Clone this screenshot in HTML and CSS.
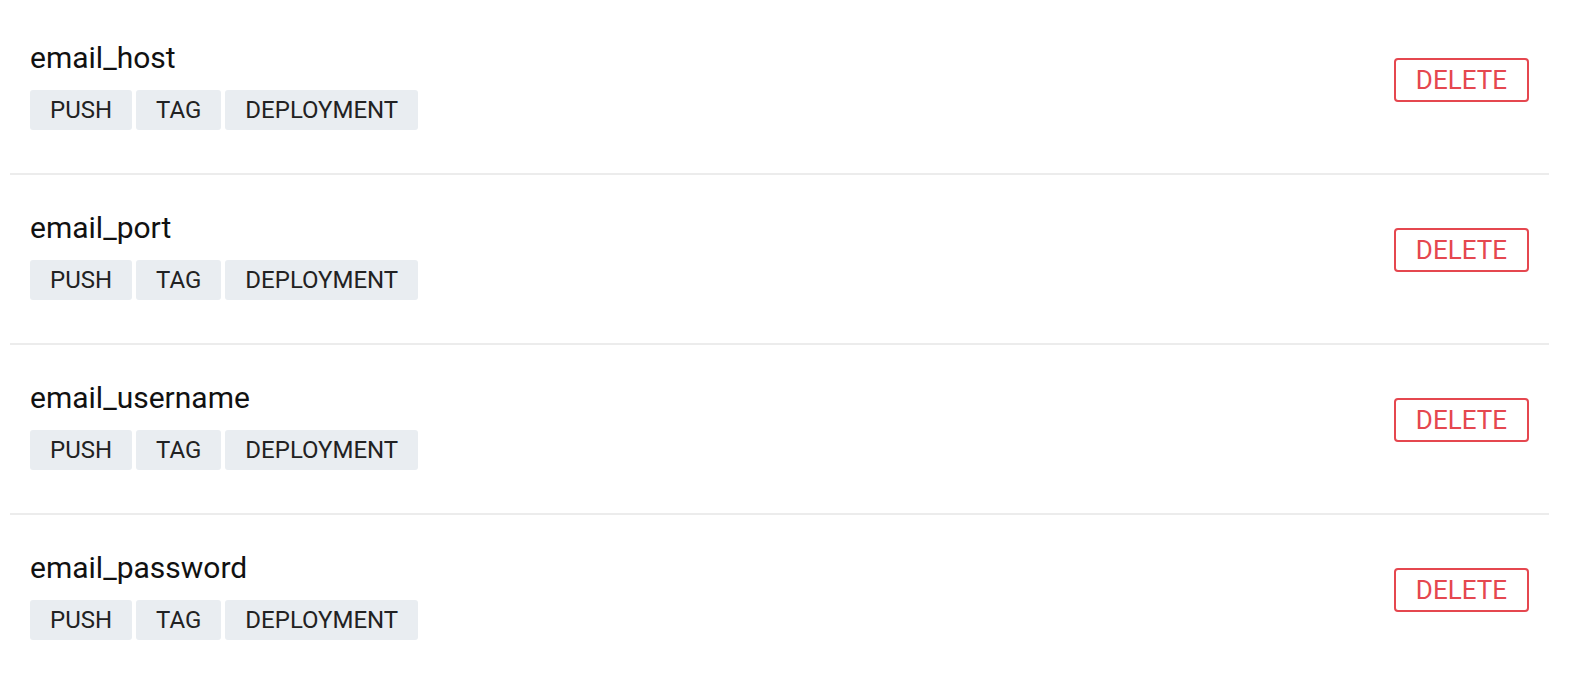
FILE: index.html
```html
<!DOCTYPE html>
<html lang="en">
<head>
  <meta charset="UTF-8" />
  <meta name="viewport" content="width=device-width, initial-scale=1.0"/>
  <title>Secrets</title>
  <link rel="stylesheet" href="styles.css">
</head>
<body>
  <div class="secrets">
    <div class="secret">
      <div class="info">
        <div class="name">email_host</div>
        <div class="events">
          <span class="event">PUSH</span>
          <span class="event">TAG</span>
          <span class="event">DEPLOYMENT</span>
        </div>
      </div>
      <button class="delete">DELETE</button>
    </div>

    <div class="secret">
      <div class="info">
        <div class="name">email_port</div>
        <div class="events">
          <span class="event">PUSH</span>
          <span class="event">TAG</span>
          <span class="event">DEPLOYMENT</span>
        </div>
      </div>
      <button class="delete">DELETE</button>
    </div>

    <div class="secret">
      <div class="info">
        <div class="name">email_username</div>
        <div class="events">
          <span class="event">PUSH</span>
          <span class="event">TAG</span>
          <span class="event">DEPLOYMENT</span>
        </div>
      </div>
      <button class="delete">DELETE</button>
    </div>

    <div class="secret">
      <div class="info">
        <div class="name">email_password</div>
        <div class="events">
          <span class="event">PUSH</span>
          <span class="event">TAG</span>
          <span class="event">DEPLOYMENT</span>
        </div>
      </div>
      <button class="delete">DELETE</button>
    </div>
  </div>
</body>
</html>
```

FILE: styles.css
```css
    body {
      font-family: Roboto, "Liberation Sans", sans-serif;
      background-color: #fff;
      color: #111;
      margin: 0;
      padding: 5px 0 0 0;
    }

    .secrets {
      margin: 0 22px 0 10px;
    }

    .secret {
      display: flex;
      justify-content: space-between;
      align-items: flex-start;
      padding: 35px 20px 43px 20px;
      border-bottom: 2px solid #ececec;
    }

    .secret:last-child {
      border-bottom: none;
    }

    .name {
      font-size: 30px;
      line-height: 36px;
      color: #111;
      margin-bottom: 14px;
    }

    .events {
      display: flex;
      gap: 4px;
    }

    .event {
      background: #e9edf1;
      color: #222;
      font-size: 24px;
      line-height: 40px;
      padding: 0 20px;
      border-radius: 3px;
    }

    .delete {
      margin-top: 18px;
      background: #fff;
      color: #e5474f;
      border: 2px solid #e5474f;
      border-radius: 4px;
      font-family: Roboto, "Liberation Sans", sans-serif;
      font-size: 26px;
      line-height: 40px;
      padding: 0 20px;
      cursor: pointer;
    }
```
